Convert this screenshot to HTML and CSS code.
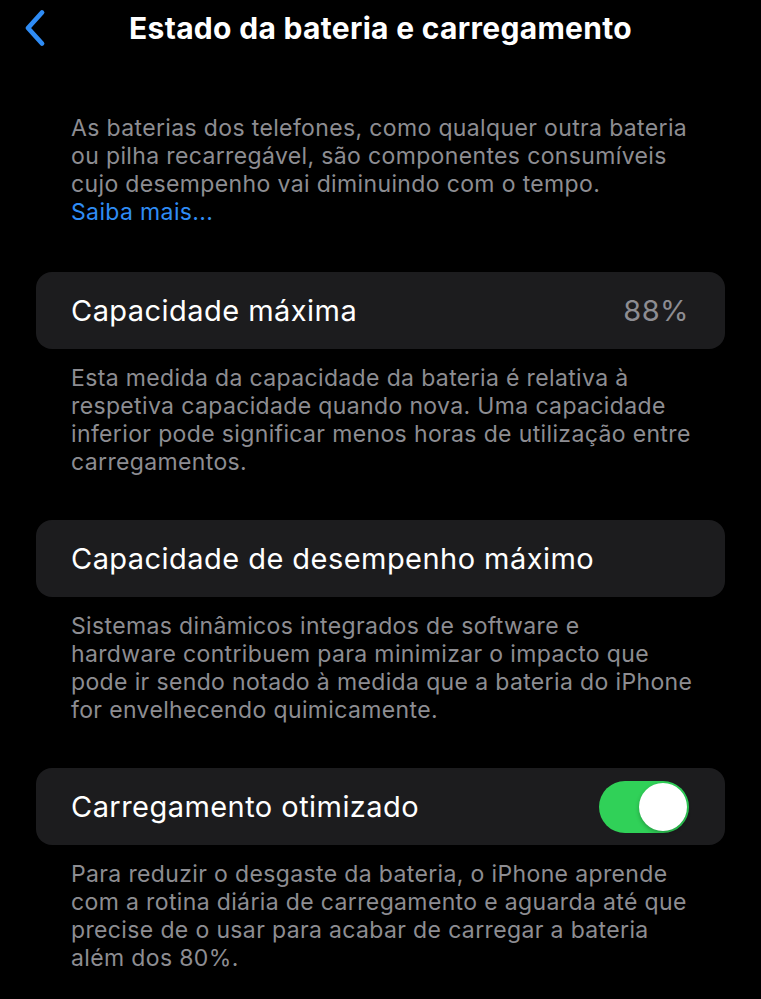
FILE: index.html
```html
<!DOCTYPE html>
<html lang="pt">
<head>
<meta charset="utf-8">
<title>Estado da bateria e carregamento</title>
<link rel="stylesheet" href="styles.css">
</head>
<body>
<div class="screen">
  <header class="nav">
    <button class="back" aria-label="Voltar">
      <svg width="26" height="38" viewBox="0 0 26 38"><path d="M20 3.5 L6 19 L20 34.5" fill="none" stroke="#2f8cf5" stroke-width="4.8" stroke-linecap="round" stroke-linejoin="round"/></svg>
    </button>
    <h1 class="title">Estado da bateria e carregamento</h1>
  </header>

  <p class="note intro">As baterias dos telefones, como qualquer outra bateria<br>ou pilha recarregável, são componentes consumíveis<br>cujo desempenho vai diminuindo com o tempo.<br><a class="link" href="#">Saiba mais...</a></p>

  <section class="group">
    <div class="cell">
      <span class="label">Capacidade máxima</span>
      <span class="value">88%</span>
    </div>
    <p class="note">Esta medida da capacidade da bateria é relativa à<br>respetiva capacidade quando nova. Uma capacidade<br>inferior pode significar menos horas de utilização entre<br>carregamentos.</p>
  </section>

  <section class="group">
    <div class="cell">
      <span class="label">Capacidade de desempenho máximo</span>
    </div>
    <p class="note">Sistemas dinâmicos integrados de software e<br>hardware contribuem para minimizar o impacto que<br>pode ir sendo notado à medida que a bateria do iPhone<br>for envelhecendo quimicamente.</p>
  </section>

  <section class="group">
    <div class="cell">
      <span class="label">Carregamento otimizado</span>
      <span class="toggle on"><span class="knob"></span></span>
    </div>
    <p class="note">Para reduzir o desgaste da bateria, o iPhone aprende<br>com a rotina diária de carregamento e aguarda até que<br>precise de o usar para acabar de carregar a bateria<br>além dos 80%.</p>
  </section>
</div>
</body>
</html>
```
FILE: styles.css
```css
html, body {
  margin: 0;
  padding: 0;
  background: #000;
}
body {
  font-family: Inter, "Liberation Sans", Arial, sans-serif;
  color: #fff;
  -webkit-font-smoothing: antialiased;
}
.screen {
  width: 761px;
  height: 999px;
  overflow: hidden;
  padding: 0 36px;
  box-sizing: border-box;
}
.nav {
  position: relative;
  height: 56px;
  display: flex;
  align-items: center;
  justify-content: center;
}
.back {
  position: absolute;
  left: -15px;
  top: 8px;
  background: none;
  border: 0;
  padding: 0;
  width: 28px;
  height: 40px;
  display: flex;
  align-items: center;
  justify-content: center;
}
.title {
  margin: 0;
  font-size: 30px;
  font-weight: 700;
  letter-spacing: 0.3px;
  color: #fff;
  white-space: nowrap;
}
.note {
  margin: 0;
  padding: 0 35px;
  font-size: 23px;
  line-height: 28px;
  color: #8d8d92;
  letter-spacing: 0.36px;
  white-space: nowrap;
}
.intro {
  margin-top: 58px;
  margin-bottom: 46px;
}
.link {
  color: #2f8cf5;
  text-decoration: none;
}
.group {
  margin-bottom: 44px;
}
.cell {
  background: #1c1c1e;
  border-radius: 16px;
  height: 77px;
  display: flex;
  align-items: center;
  justify-content: space-between;
  padding: 0 36px 0 35px;
  margin-bottom: 15px;
}
.label {
  font-size: 29px;
  color: #fff;
  letter-spacing: 0.45px;
}
.value {
  font-size: 29px;
  color: #8d8d92;
  letter-spacing: 0.45px;
}
.toggle {
  width: 90px;
  height: 52px;
  border-radius: 26px;
  background: #30d158;
  position: relative;
  flex: none;
}
.toggle .knob {
  position: absolute;
  top: 2px;
  right: 2px;
  width: 48px;
  height: 48px;
  border-radius: 50%;
  background: #fff;
  box-shadow: 0 2px 4px rgba(0,0,0,0.25);
}
```
